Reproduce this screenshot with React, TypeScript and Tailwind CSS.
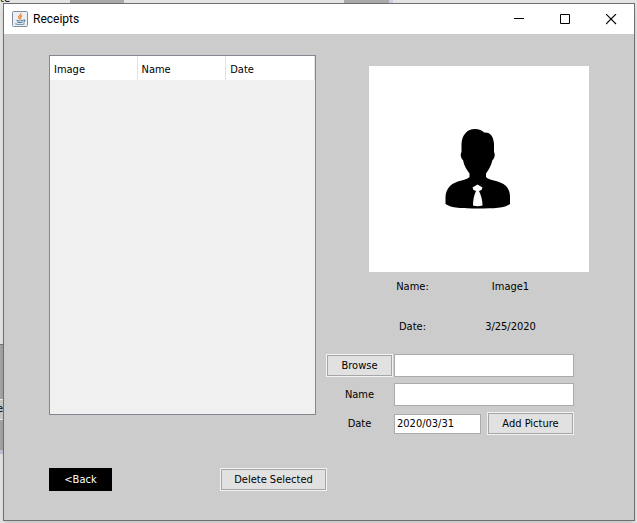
import type { ReactNode } from "react";

function SwingButton({ children, className = "" }: { children: ReactNode; className?: string }) {
  return (
    <button type="button" className={`h-[23px] border border-[#f2f2f2] bg-[#e1e1e1] ${className}`}>
      <span className="flex h-full items-center justify-center border border-[#a6a6a6] whitespace-nowrap">
        {children}
      </span>
    </button>
  );
}

function JavaIcon() {
  return (
    <svg width="16" height="16" viewBox="0 0 16 16" fill="none" aria-hidden="true">
      <rect x="0.5" y="0.5" width="15" height="15" rx="1" fill="#edf1f4" stroke="#7d8f9e" />
      <path d="M8.8 2.2c.8 1.8-2.6 2.6-2.2 4.2.1.7.8 1.2 1.2 1.9M10.2 4.6C8.6 5.3 8 6 8.8 7c.3.5 0 1-.4 1.4" stroke="#e8803a" strokeWidth="1.2" />
      <path d="M4.5 9.2c1.5.8 5 .8 6.600 0M5.200 11c1.400.7 3.800.7 5.200 0M3.200 12.800c2.500 1 7.200 1 9.400 0M11.400 9c2-.5 2 1.600-.2 2.200" stroke="#557fa3" strokeWidth="1.1" />
    </svg>
  );
}

function Portrait() {
  return (
    <svg width="68" height="80" viewBox="0 0 68 80" role="img" aria-label="Picture preview">
      <path
        d="M30 0C34 0 37 1.500 39 3.500C46 3 48.500 8 49 15V23C50.500 25 49.500 30 47.500 31C46 37 43.500 41 41 44.500V48C44 52 55 51 61 57C64 60 65 64 65 68V75C60 79 49 79.500 33 79.500S6 79 .5 75V68C.5 64 2 60 5 57C11 51 21 52 24.500 48V44.500C22 41 19 37 18 31C16 30 15 25 16.500 23V15C17 6 22 0 30 0Z"
        fill="#000"
      />
      <path d="M32.500 55.500L37.500 58.500L36.500 61L34 62C36 66 37.500 71 37.500 76.500C34 77.500 31 77.500 28 76.500C28 71 29 66 31 62L28.500 61L27.500 58.500Z" fill="#fff" />
    </svg>
  );
}

function TitleBar() {
  return (
    <header className="flex h-[30px] items-center bg-white pl-2">
      <JavaIcon />
      <h1 className="ml-[5px] flex-1 font-[Roboto,sans-serif] text-[12px] leading-4">Receipts</h1>
      <button type="button" aria-label="Minimize" className="flex h-full w-[46px] items-center justify-center">
        <svg width="11" height="11" viewBox="0 0 11 11"><path d="M0 4.500H10" stroke="#000" /></svg>
      </button>
      <button type="button" aria-label="Maximize" className="flex h-full w-[46px] items-center justify-center">
        <svg width="11" height="11" viewBox="0 0 11 11"><path d="M.5 .5H9.500V9.500H.5Z" fill="none" stroke="#000" /></svg>
      </button>
      <button type="button" aria-label="Close" className="flex h-full w-[46px] items-center justify-center">
        <svg width="11" height="11" viewBox="0 0 11 11"><path d="M0 0L10 10M10 0L0 10" stroke="#000" strokeWidth="1.1" /></svg>
      </button>
    </header>
  );
}

const headCell = "border-r border-[#e2e2e2] px-1 pt-[3px] font-normal";

function ReceiptsTable() {
  return (
    <div className="h-[360px] min-w-0 flex-1 border border-[#828790] bg-[#f0f0f0]">
      <table className="w-full table-fixed border-collapse">
        <thead>
          <tr className="h-6 bg-white text-left">
            <th className={`w-[87px] ${headCell}`}>Image</th>
            <th className={headCell}>Name</th>
            <th className={headCell}>Date</th>
          </tr>
        </thead>
        <tbody />
      </table>
    </div>
  );
}

const field = "w-full min-w-0 border border-[#ababab] bg-white px-[2px] outline-none";

function Details() {
  return (
    <section className="w-[263px] shrink-0 pt-[11px]">
      <div className="ml-[43px]">
        <div className="flex h-[206px] items-center justify-center bg-white">
          <Portrait />
        </div>
        <dl className="mt-[5px] grid grid-cols-[87px_109px] gap-y-5 text-center leading-5">
          <dt>Name:</dt>
          <dd>Image1</dd>
          <dt>Date:</dt>
          <dd>3/25/2020</dd>
        </dl>
      </div>
      <form className="mt-[17px] mr-[15px] grid grid-cols-[67px_1fr] items-center gap-x-px gap-y-[6px]">
        <SwingButton>Browse</SwingButton>
        <input aria-label="File path" type="text" className={`h-[23px] ${field}`} />
        <label htmlFor="name" className="text-center">Name</label>
        <input id="name" type="text" className={`h-[23px] ${field}`} />
        <label htmlFor="date" className="text-center">Date</label>
        <div className="flex items-center gap-[6px]">
          <input id="date" type="text" defaultValue="2020/03/31" className={`h-5 ${field}`} />
          <SwingButton className="w-[87px] shrink-0">Add Picture</SwingButton>
        </div>
      </form>
    </section>
  );
}

function Backdrop() {
  return (
    <div aria-hidden="true" className="absolute inset-0 overflow-hidden bg-[#e4e4e4]">
      <div className="absolute top-0 left-[70px] h-1 w-[54px] bg-[#a9a9a9]" />
      <div className="absolute top-0 left-[344px] h-1 w-[45px] bg-[#a9a9a9]" />
      <div className="absolute top-0 left-[389px] h-1 w-1 bg-[#cfcfe4]" />
      <div className="absolute top-[344px] left-0 h-[107px] w-1 border-t border-[#777] bg-[#a4a4a4]" />
      <div className="absolute top-[399px] left-0 h-[21px] w-1 border-y border-[#eee] bg-[#c8c8c8]" />
      <div className="absolute top-[450px] left-0 h-1 w-1 bg-[#c0c0d8]" />
      <span className="absolute top-[-7px] left-0 leading-3">te</span>
      <span className="absolute top-[403px] left-[-3px] leading-3">e</span>
    </div>
  );
}

export default function App() {
  return (
    <div className="relative flex min-h-screen flex-col pt-[3px] pr-[2px] pb-[2px] pl-[3px] font-['DejaVu_Sans_Condensed','DejaVu_Sans',sans-serif] text-[11px] leading-4 text-black">
      <Backdrop />
      <div className="relative flex flex-1 flex-col border border-[#6f6f6f] bg-[#cccccc] shadow-md">
        <TitleBar />
        <main className="px-[45px] pt-[21px] pb-[29px]">
          <div className="flex items-start gap-[10px]">
            <ReceiptsTable />
            <Details />
          </div>
          <div className="mt-[33px] flex gap-[108px]">
            <button type="button" className="h-[23px] w-[63px] bg-black text-white">&lt;Back</button>
            <SwingButton className="w-[107px]">Delete Selected</SwingButton>
          </div>
        </main>
      </div>
    </div>
  );
}
